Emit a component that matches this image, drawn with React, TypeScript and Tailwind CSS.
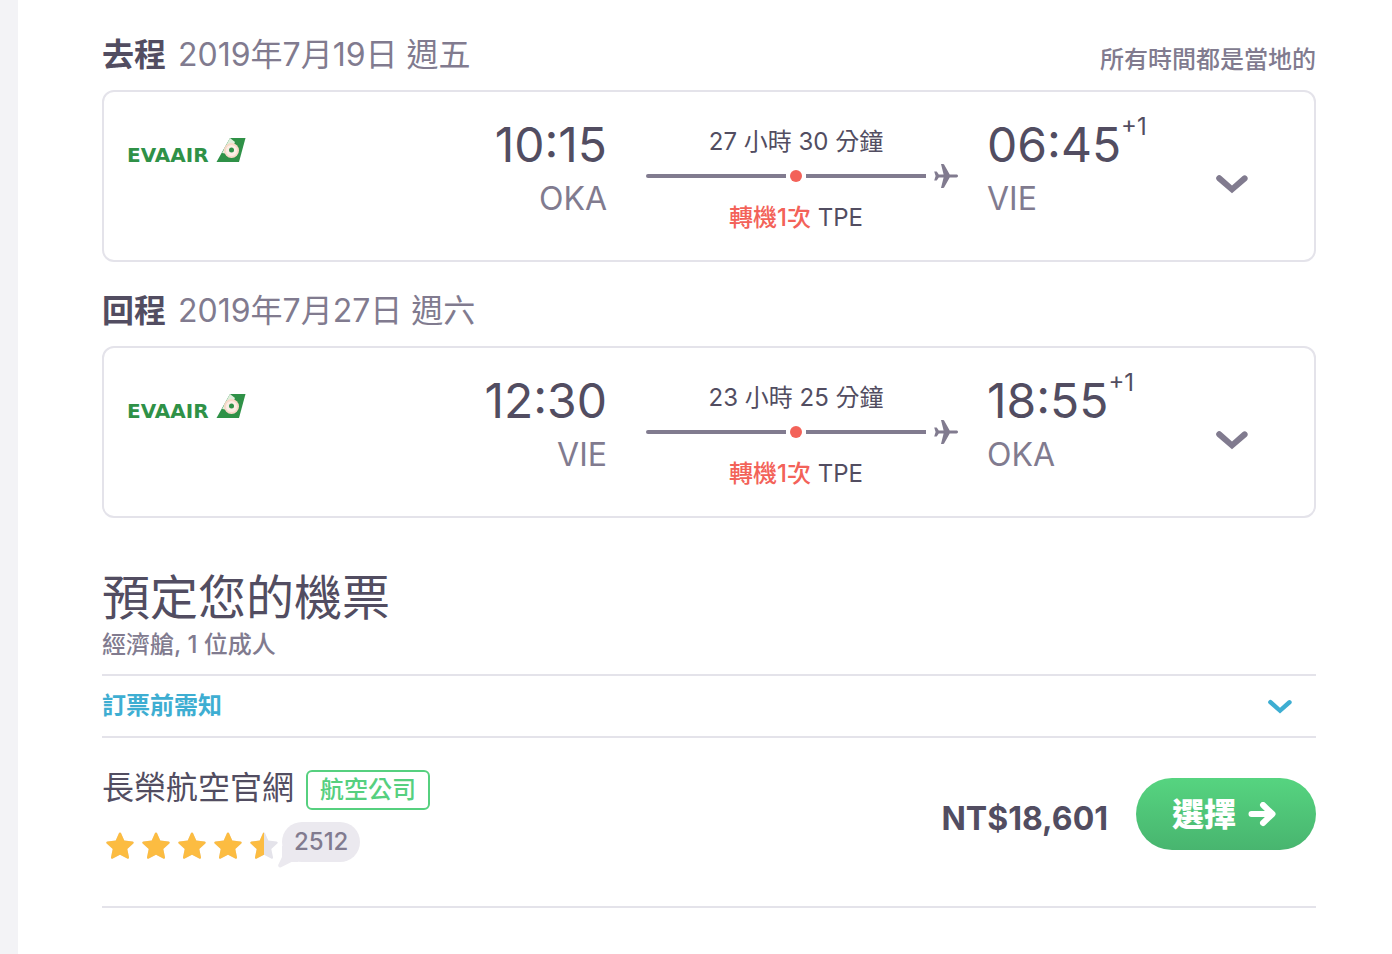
type Place = { time: string; code: string };

type Leg = {
  label: string;
  date: string;
  note?: string;
  departure: Place;
  arrival: Place;
  duration: string;
};

const legs: Leg[] = [
  {
    label: '去程',
    date: '2019年7月19日 週五',
    note: '所有時間都是當地的',
    departure: { time: '10:15', code: 'OKA' },
    arrival: { time: '06:45', code: 'VIE' },
    duration: '27 小時 30 分鐘',
  },
  {
    label: '回程',
    date: '2019年7月27日 週六',
    departure: { time: '12:30', code: 'VIE' },
    arrival: { time: '18:55', code: 'OKA' },
    duration: '23 小時 25 分鐘',
  },
];

const STAR_PATH =
  'M18 4.400c.5 0 .9.300 1.100.8l3.200 7.400 8.200.8c1.200.1 1.600 1.400.8 2.200l-6 5.500 1.700 8.200c.2 1.100-.8 1.900-1.800 1.300L18 26.800l-7.200 3.800c-1 .6-2-.2-1.800-1.300l1.700-8.200-6-5.500c-.8-.8-.4-2.100.8-2.200l8.200-.8 3.200-7.400c.2-.5.600-.8 1.100-.8z';

function Chevron({ className }: { className: string }) {
  return (
    <svg viewBox="0 0 32 20" className={className} fill="currentColor" aria-hidden="true">
      <path d="M1 2.200a3.100 3.100 0 0 1 4.300-.3L16 11.500l10.700-9.600a3.100 3.100 0 0 1 4.200 4.500L16 19.200 1.100 6.400A3 3 0 0 1 1 2.200z" />
    </svg>
  );
}

function AirlineLogo() {
  return (
    <div className="flex items-end gap-[7px] text-[#2f9147]">
      <span className="font-['DejaVu_Sans'] text-[20px] leading-4 font-bold whitespace-nowrap">EVAAIR</span>
      <svg viewBox="0 0 30 26" className="h-[26px] w-[30px] shrink-0" aria-hidden="true">
        <path d="M14 1h15.500l-6.500 24H.5z" fill="currentColor" />
        <path d="M6 16 14 1l5 4-6 12z" fill="#e0efdc" />
        <circle cx="15.500" cy="13.500" r="7.500" fill="#f8d9c8" />
        <circle cx="15.500" cy="13.500" r="5.500" fill="#fbeee6" />
        <circle cx="15.500" cy="13" r="2.500" fill="currentColor" />
      </svg>
    </div>
  );
}

function Plane() {
  return (
    <svg viewBox="0 0 24 24" className="h-6 w-6" fill="currentColor" aria-hidden="true">
      <path d="M7 0h2.200c.4 0 .7.200.9.500L15.700 10.600H22.500c.8 0 1.500.6 1.500 1.400s-.7 1.400-1.500 1.400h-6.800l-5.600 10.100c-.2.300-.5.500-.9.500H7l2.600-10.600H4.800l-1.900 2.900c-.2.200-.4.300-.7.300H.2L1.600 12 .2 7.400h2c.3 0 .5.100.7.300l1.900 2.900h4.800z" />
    </svg>
  );
}

function Route({ duration }: { duration: string }) {
  return (
    <div className="w-[312px] shrink-0 pt-8 text-2xl leading-9">
      <p className="w-[300px] text-center">{duration}</p>
      <div className="flex h-8 items-center text-[#817b8f]">
        <span className="h-1 flex-1 rounded-l-full bg-current" />
        <span className="mx-1 h-3 w-3 rounded-full bg-[#f36259]" />
        <span className="h-1 w-[120px] bg-current" />
        <span className="ml-2">
          <Plane />
        </span>
      </div>
      <p className="mt-2 w-[300px] text-center">
        <span className="font-medium text-[#f36259]">轉機1次</span> TPE
      </p>
    </div>
  );
}

function LegCard({ leg }: { leg: Leg }) {
  return (
    <section>
      <header className="flex h-[84px] items-center justify-between pt-[14px]">
        <h2 className="flex gap-3 text-[32px] leading-10 text-[#817b8f]">
          <strong className="font-bold text-[#524d61]">{leg.label}</strong>
          {leg.date}
        </h2>
        {leg.note && <p className="pt-[10px] text-2xl font-medium text-[#817b8f]">{leg.note}</p>}
      </header>
      <div className="flex h-[172px] rounded-xl border-2 border-[#e4e3ea] pr-[66px] pl-[23px]">
        <div className="pt-[45px]">
          <AirlineLogo />
        </div>
        <div className="flex-1 pt-[23px] pr-[39px] text-right">
          <p className="text-5xl leading-[60px]">{leg.departure.time}</p>
          <p className="text-[32px] leading-[48px] text-[#817b8f]">{leg.departure.code}</p>
        </div>
        <Route duration={leg.duration} />
        <div className="w-[258px] pt-[23px] pl-[29px]">
          <div className="flex items-start text-5xl leading-[60px]">
            {leg.arrival.time}
            <sup className="top-0 text-2xl leading-6">+1</sup>
          </div>
          <p className="text-[32px] leading-[48px] text-[#817b8f]">{leg.arrival.code}</p>
        </div>
        <button type="button" aria-label="顯示詳情" className="mt-4 text-[#817b8f]">
          <Chevron className="h-5 w-8" />
        </button>
      </div>
    </section>
  );
}

function Stars() {
  return (
    <div className="flex" role="img" aria-label="4.5 / 5">
      {[1, 2, 3, 4, 5].map((n) => (
        <svg key={n} viewBox="0 0 36 36" className="h-9 w-9" aria-hidden="true">
          <defs>
            <clipPath id={`star-${n}`}>
              <rect width={n === 5 ? 18 : 36} height="36" />
            </clipPath>
          </defs>
          <path d={STAR_PATH} fill="#e4e3ea" />
          <path d={STAR_PATH} fill="#fcbc41" clipPath={`url(#star-${n})`} />
        </svg>
      ))}
    </div>
  );
}

function Provider() {
  return (
    <div className="flex h-[170px] items-start justify-between border-b-2 border-[#e4e3ea]">
      <div className="pt-7">
        <div className="flex items-center gap-3">
          <h3 className="text-[32px] leading-10">長榮航空官網</h3>
          <span className="mt-1 flex h-10 items-center rounded-md border-2 border-[#56d07f] px-3 text-2xl font-medium text-[#56d07f]">
            航空公司
          </span>
        </div>
        <div className="mt-3 flex items-start">
          <div className="pt-[6px]">
            <Stars />
          </div>
          <span className="relative flex h-10 items-center rounded-full bg-[#ebe9ef] px-3 text-2xl font-medium text-[#817b8f]">
            <svg viewBox="0 0 20 22" className="absolute top-6 -left-1 h-[22px] w-5" fill="#ebe9ef" aria-hidden="true">
              <path d="M4 0v11L.4 18.500c-.8 2 .6 3.500 2.600 2.700L13.500 16H20V0z" />
            </svg>
            <span className="relative">2512</span>
          </span>
        </div>
      </div>
      <div className="flex items-center gap-7 pt-10">
        <strong className="pt-[10px] text-[32px] font-bold">NT$18,601</strong>
        <button
          type="button"
          className="flex h-[72px] w-[180px] items-center justify-center gap-3 rounded-full bg-linear-to-b from-[#56d480] to-[#48b56f] pt-0.5 pr-1 text-[32px] font-extrabold text-white"
        >
          選擇
          <svg viewBox="0 0 28 26" className="h-[26px] w-7" fill="none" aria-hidden="true">
            <path
              d="M3.500 12H24M15 3l9.500 9L15 21"
              stroke="currentColor"
              strokeWidth="6"
              strokeLinecap="round"
              strokeLinejoin="round"
            />
          </svg>
        </button>
      </div>
    </div>
  );
}

export default function App() {
  return (
    <main
      lang="zh-TW"
      className="min-h-screen border-l-[18px] border-[#f3f3f6] bg-white pr-[76px] pl-[84px] font-[Inter,'Noto_Sans_CJK_TC',sans-serif] text-[#524d61]"
    >
      <div className="pt-[6px]">
        {legs.map((leg) => (
          <LegCard key={leg.label} leg={leg} />
        ))}
      </div>
      <section className="pt-[50px]">
        <h1 className="text-5xl leading-[60px]">預定您的機票</h1>
        <p className="pb-3 text-2xl leading-[34px] font-medium text-[#817b8f]">經濟艙, 1 位成人</p>
        <button
          type="button"
          className="flex h-16 w-full items-center justify-between border-y-2 border-[#e4e3ea] pr-6 text-2xl font-bold text-[#3eaed2]"
        >
          訂票前需知
          <Chevron className="h-[15px] w-6" />
        </button>
        <Provider />
      </section>
    </main>
  );
}
